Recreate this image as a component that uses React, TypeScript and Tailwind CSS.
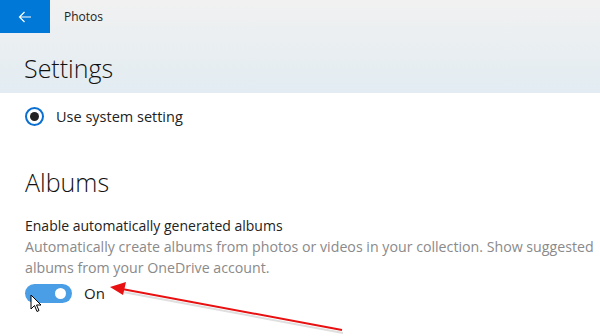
import React from 'react';

const font = { fontFamily: '"Open Sans", "Noto Sans", sans-serif' };

const App: React.FC = () => {
  return (
    <div className="relative w-[600px] h-[336px] overflow-hidden bg-white text-[#1a1a1a]" style={font}>
      {/* Header */}
      <div className="h-[93px] bg-gradient-to-b from-[#f1f1f1] to-[#e2ecf2]">
        <div className="flex items-center h-[33px]">
          <div className="w-[50px] h-[33px] bg-[#0078d7] flex items-center justify-center">
            <svg width="14" height="12" viewBox="0 0 14 12" fill="none" stroke="white" strokeWidth="1.2">
              <path d="M13 6H1.5M6.5 1L1.5 6l5 5" />
            </svg>
          </div>
          <span className="ml-[14px] text-[12px] text-[#222]">Photos</span>
        </div>
        <div className="pl-[24px] pt-[23px] text-[25px] leading-none text-[#111] font-light">Settings</div>
      </div>

      {/* Content */}
      <div className="pl-[25px]">
        <div className="flex items-center h-[48px] pb-[1px]">
          <div className="w-[19px] h-[19px] rounded-full border-[2px] border-[#0a6fd0] flex items-center justify-center">
            <div className="w-[9px] h-[9px] rounded-full bg-[#222]" />
          </div>
          <span className="ml-[12px] text-[14.5px] text-[#222]">Use system setting</span>
        </div>

        <div className="mt-[29px] text-[25px] leading-none text-[#111] font-light">Albums</div>

        <div className="mt-[21px] text-[14px] leading-[20px] text-[#222]">Enable automatically generated albums</div>
        <div className="text-[14.2px] leading-[21px] text-[#8a8a8a] w-[575px]">
          Automatically create albums from photos or videos in your collection. Show suggested albums from your OneDrive account.
        </div>

        <div className="flex items-center mt-[4px]">
          <div className="relative w-[47px] h-[19px] rounded-full bg-[#4a9ee6]">
            <div className="absolute right-[6px] top-[4px] w-[11px] h-[11px] rounded-full bg-white" />
          </div>
          <span className="ml-[12px] text-[15px] text-[#222]">On</span>
        </div>
      </div>

      {/* Cursor */}
      <svg className="absolute left-[30px] top-[294px]" width="12" height="19" viewBox="0 0 12 19">
        <path d="M1 1v14l3.5-3.5 2.5 6 2-1-2.5-5.5H11z" fill="white" stroke="black" strokeWidth="1" />
      </svg>

      {/* Red arrow annotation */}
      <svg className="absolute left-0 top-0" width="600" height="336" viewBox="0 0 600 336">
        <line x1="342" y1="331" x2="122" y2="290" stroke="#b0b0b0" strokeWidth="2" opacity="0.4" transform="translate(1,2)" />
        <line x1="342" y1="330" x2="122" y2="289" stroke="#e81010" strokeWidth="2" />
        <polygon points="110,287 126,282 123,295" fill="#e81010" />
      </svg>
    </div>
  );
};

export default App;
